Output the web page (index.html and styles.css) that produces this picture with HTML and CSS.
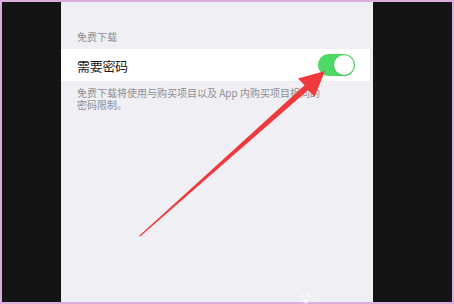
FILE: index.html
```html
<!DOCTYPE html>
<html lang="zh-CN">
<head>
<meta charset="utf-8">
<link rel="stylesheet" href="styles.css">
</head>
<body>
<div class="frame">
  <div class="panel">
    <div class="section-header">免费下载</div>
    <div class="row">
      <span class="row-label">需要密码</span>
      <span class="toggle"><span class="knob"></span></span>
    </div>
    <div class="section-footer">免费下载将使用与购买项目以及 App 内购买项目相同的密码限制。</div>
  </div>
  <svg class="overlay" width="454" height="304" viewBox="0 0 454 304">
    <polygon fill="#ef3a3d" points="139,236 304.6,85.2 298,78.4 325,71 314.6,96.8 308.2,90 140.2,236.6"/>
    <g fill="#ffffff" opacity="0.55">
      <circle cx="303" cy="296" r="2"/>
      <circle cx="308" cy="295" r="2"/>
      <circle cx="312" cy="297" r="1.6"/>
      <circle cx="306" cy="301" r="2.6"/>
    </g>
  </svg>
</div>
</body>
</html>
```

FILE: styles.css
```css
html, body {
  margin: 0;
  padding: 0;
}
body {
  width: 454px;
  height: 304px;
  overflow: hidden;
  font-family: "Noto Sans CJK SC", "Noto Sans", sans-serif;
}
.frame {
  position: relative;
  box-sizing: border-box;
  width: 454px;
  height: 304px;
  border: 2px solid #dcaedd;
  background: #141414;
  display: flex;
}
.panel {
  margin-left: 59px;
  width: 312px;
  height: 100%;
  background: #efeff4;
  display: flex;
  flex-direction: column;
}
.section-header {
  margin-top: 29px;
  padding-left: 16px;
  font-size: 10px;
  line-height: 12px;
  color: #8e8e93;
  height: 18px;
}
.row {
  width: 309px;
  height: 32px;
  box-sizing: border-box;
  background: #ffffff;
  display: flex;
  align-items: center;
  justify-content: space-between;
  padding-left: 16px;
  padding-right: 15px;
}
.row-label {
  font-size: 13px;
  color: #1c1c1e;
  letter-spacing: -0.3px;
}
.toggle {
  width: 37px;
  height: 22px;
  border-radius: 11px;
  background: #4cd964;
  display: flex;
  align-items: center;
  justify-content: flex-end;
  padding-right: 1px;
  box-sizing: border-box;
}
.knob {
  width: 20px;
  height: 20px;
  border-radius: 50%;
  background: #ffffff;
  box-shadow: 0 1px 2px rgba(0,0,0,0.2);
}
.section-footer {
  margin-top: 6px;
  padding-left: 16px;
  max-width: 246px;
  font-size: 10px;
  line-height: 12px;
  color: #8e8e93;
}
.overlay {
  position: absolute;
  left: -2px;
  top: -2px;
}
```
